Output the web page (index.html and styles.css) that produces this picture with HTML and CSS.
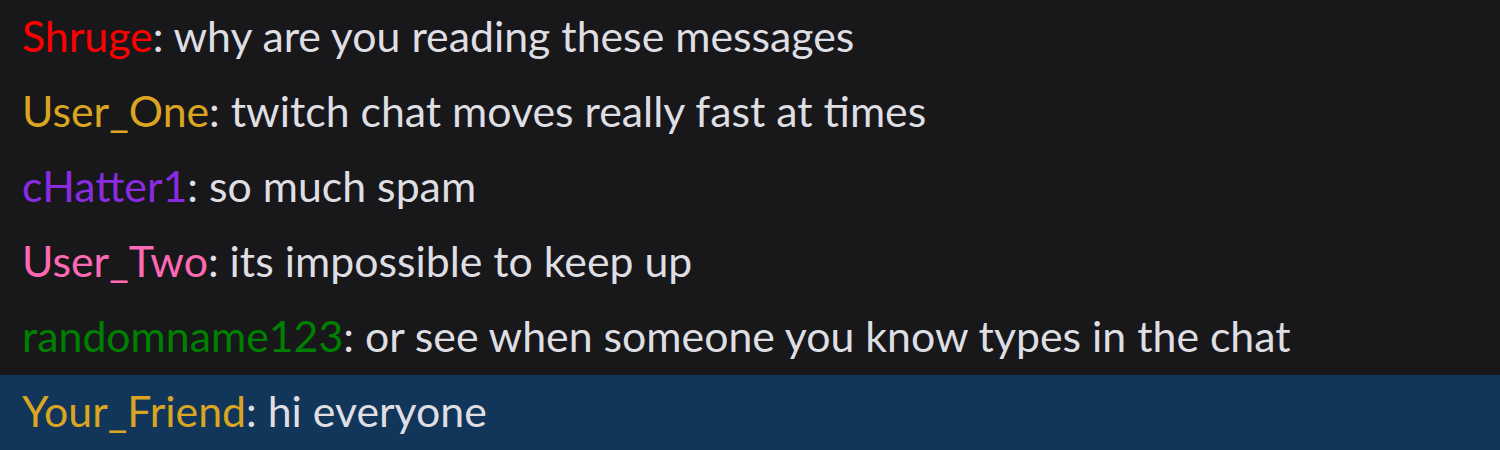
FILE: index.html
```html
<!DOCTYPE html>
<html>
<head>
<meta charset="utf-8">
<link rel="stylesheet" href="styles.css">
</head>
<body>
<div class="chat">
  <div class="msg"><span class="name red">Shruge</span>: why are you reading these messages</div>
  <div class="msg"><span class="name gold">User_One</span>: twitch chat moves really fast at times</div>
  <div class="msg"><span class="name purple">cHatter1</span>: so much spam</div>
  <div class="msg"><span class="name pink">User_Two</span>: its impossible to keep up</div>
  <div class="msg"><span class="name green">randomname123</span>: or see when someone you know types in the chat</div>
  <div class="msg highlight"><span class="name gold">Your_Friend</span>: hi everyone</div>
</div>
</body>
</html>
```
FILE: styles.css
```css
html, body {
  margin: 0;
  padding: 0;
  background: #18181b;
}
.chat {
  width: 1500px;
  height: 450px;
  display: flex;
  flex-direction: column;
  background: #18181b;
  font-family: "Lato", "Open Sans", sans-serif;
  font-size: 42.8px;
  color: #dedee3;
}
.msg {
  height: 75px;
  box-sizing: border-box;
  padding: 0 0 4px 22px;
  line-height: 71px;
  white-space: nowrap;
}
.highlight {
  background: #12365a;
}
.red { color: #ff0000; }
.gold { color: #daa520; }
.purple { color: #8a2be2; }
.pink { color: #ff69b4; }
.green { color: #008000; }
```
